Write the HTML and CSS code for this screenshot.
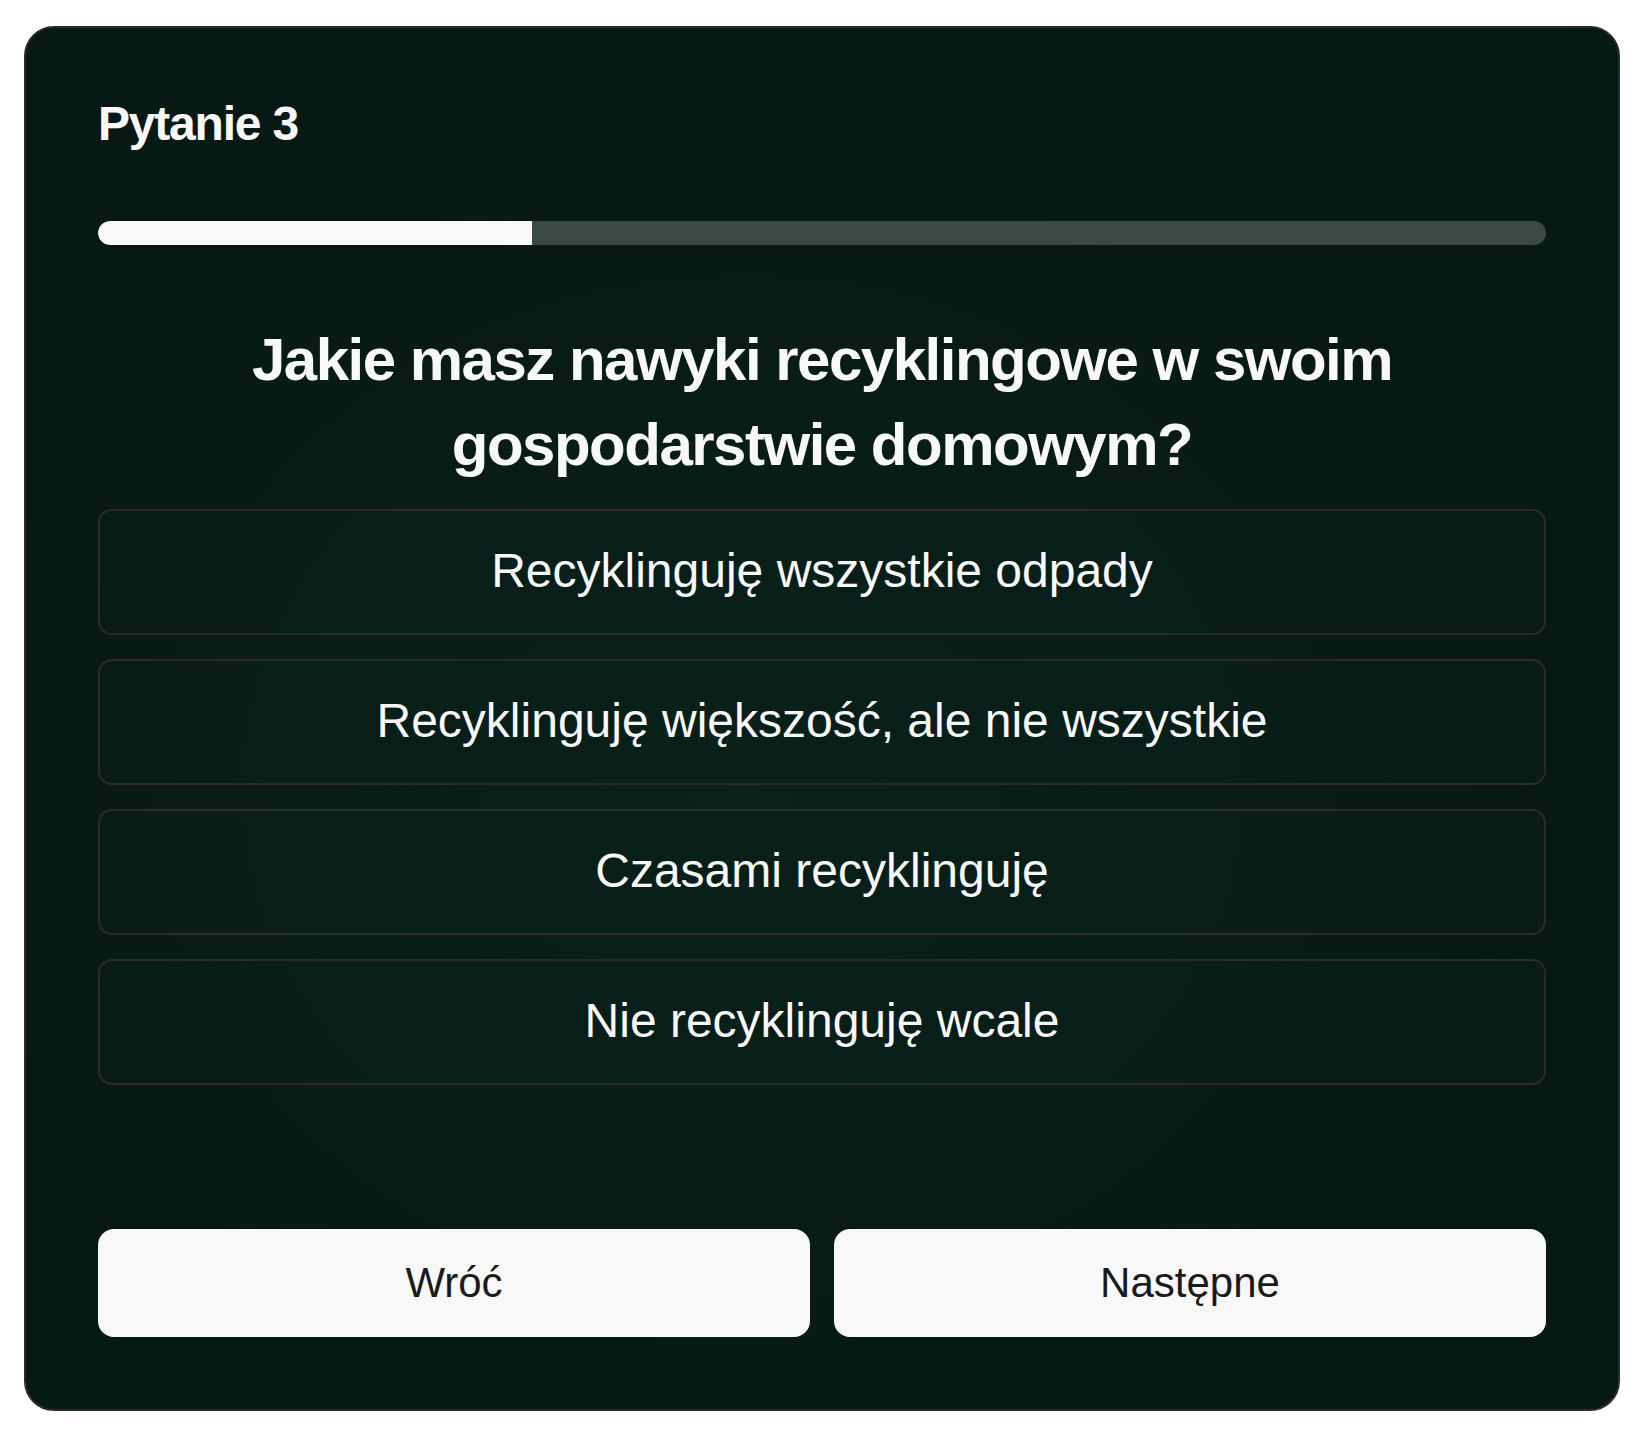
FILE: index.html
```html
<!DOCTYPE html>
<html lang="pl">
<head>
<meta charset="utf-8">
<title>Pytanie 3</title>
<link rel="stylesheet" href="styles.css">
</head>
<body>
<main class="card">
  <h2 class="step">Pytanie 3</h2>
  <div class="progress"><div class="progress-fill" style="width:30%"></div></div>
  <h1 class="question">Jakie masz nawyki recyklingowe w swoim gospodarstwie domowym?</h1>
  <div class="options">
    <button class="option">Recyklinguję wszystkie odpady</button>
    <button class="option">Recyklinguję większość, ale nie wszystkie</button>
    <button class="option">Czasami recyklinguję</button>
    <button class="option">Nie recyklinguję wcale</button>
  </div>
  <div class="nav">
    <button class="nav-btn">Wróć</button>
    <button class="nav-btn">Następne</button>
  </div>
</main>
</body>
</html>
```

FILE: styles.css
```css
* { box-sizing: border-box; }
html, body { margin: 0; padding: 0; background: #ffffff; }
body {
  font-family: "Liberation Sans", Arial, sans-serif;
  padding: 26px 20px 27px 24px;
}
.card {
  height: 1385px;
  border: 2px solid #2b2b2b;
  border-radius: 30px;
  background:
    radial-gradient(ellipse at 45% 55%, rgba(14, 40, 32, 0.45), rgba(0, 0, 0, 0) 65%),
    #071915;
  padding: 72px;
  display: flex;
  flex-direction: column;
}
.step {
  margin: 0;
  font-size: 48px;
  line-height: 48px;
  font-weight: 700;
  letter-spacing: -0.025em;
  color: #f8f8f8;
}
.progress {
  margin-top: 73px;
  height: 24px;
  border-radius: 12px;
  background: #394a45;
  overflow: hidden;
}
.progress-fill {
  height: 100%;
  background: #f8f8f8;
  border-radius: 12px 0 0 12px;
}
.question {
  margin: 72px 0 0;
  font-size: 60px;
  line-height: 85px;
  font-weight: 700;
  letter-spacing: -0.025em;
  text-align: center;
  color: #f8f8f8;
  padding: 0 140px;
}
.options {
  margin-top: 22px;
  display: flex;
  flex-direction: column;
  gap: 24px;
}
.option {
  height: 126px;
  border: 2px solid #2c2a2a;
  border-radius: 14px;
  background: rgba(10, 34, 27, 0.35);
  color: #f8f8f8;
  font-family: "Liberation Sans", Arial, sans-serif;
  font-size: 48px;
  text-align: center;
  padding: 0 0 4px;
}
.nav {
  margin-top: auto;
  display: grid;
  grid-template-columns: 1fr 1fr;
  gap: 24px;
}
.nav-btn {
  height: 108px;
  border: none;
  border-radius: 16px;
  background: #f8f8f8;
  color: #1a1a1a;
  font-family: "Liberation Sans", Arial, sans-serif;
  font-size: 42px;
}
```
